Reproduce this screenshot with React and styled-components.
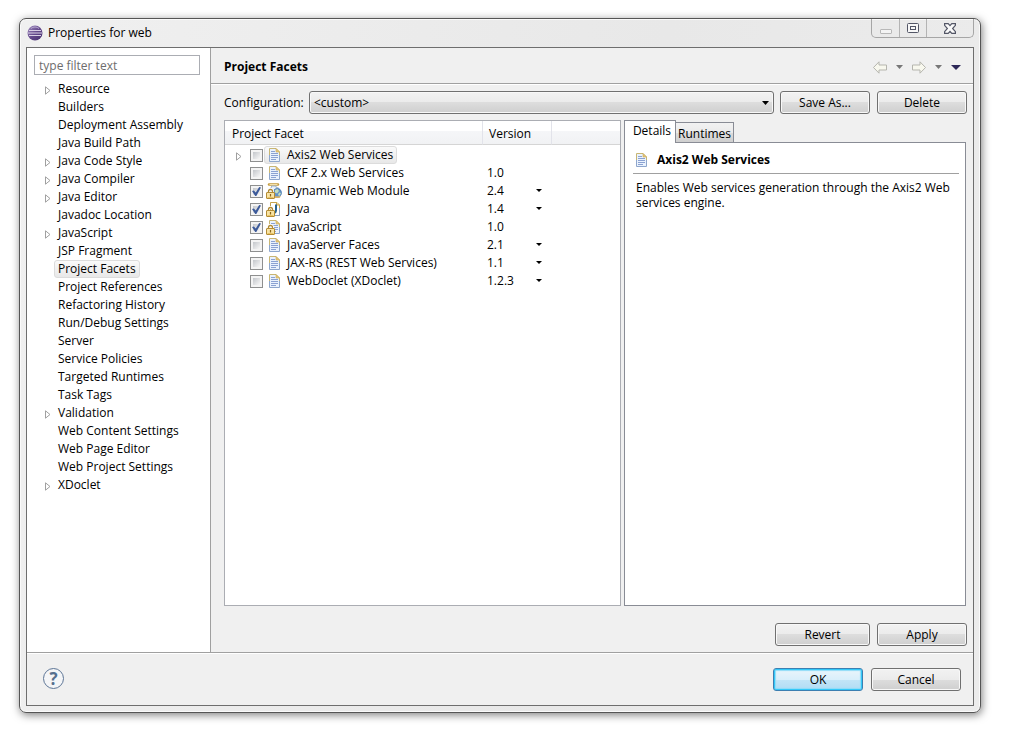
import { useState } from 'react';
import styled, { createGlobalStyle, css } from 'styled-components';

const pages = [
	{ name: 'Resource', expandable: true },
	{ name: 'Builders' },
	{ name: 'Deployment Assembly' },
	{ name: 'Java Build Path' },
	{ name: 'Java Code Style', expandable: true },
	{ name: 'Java Compiler', expandable: true },
	{ name: 'Java Editor', expandable: true },
	{ name: 'Javadoc Location' },
	{ name: 'JavaScript', expandable: true },
	{ name: 'JSP Fragment' },
	{ name: 'Project Facets' },
	{ name: 'Project References' },
	{ name: 'Refactoring History' },
	{ name: 'Run/Debug Settings' },
	{ name: 'Server' },
	{ name: 'Service Policies' },
	{ name: 'Targeted Runtimes' },
	{ name: 'Task Tags' },
	{ name: 'Validation', expandable: true },
	{ name: 'Web Content Settings' },
	{ name: 'Web Page Editor' },
	{ name: 'Web Project Settings' },
	{ name: 'XDoclet', expandable: true },
];

const facets = [
	{ name: 'Axis2 Web Services', expandable: true, icon: 'doc' },
	{ name: 'CXF 2.x Web Services', version: '1.0', icon: 'doc' },
	{ name: 'Dynamic Web Module', version: '2.4', icon: 'web', checked: true, choice: true },
	{ name: 'Java', version: '1.4', icon: 'java', checked: true, choice: true },
	{ name: 'JavaScript', version: '1.0', icon: 'script', checked: true },
	{ name: 'JavaServer Faces', version: '2.1', icon: 'doc', choice: true },
	{ name: 'JAX-RS (REST Web Services)', version: '1.1', icon: 'doc', choice: true },
	{ name: 'WebDoclet (XDoclet)', version: '1.2.3', icon: 'doc', choice: true },
];

function EclipseLogo() {
	return (
		<svg width='16' height='16' viewBox='0 0 16 16' aria-hidden='true'>
			<defs>
				<linearGradient id='ball' x1='0' y1='0' x2='1' y2='1'>
					<stop offset='0' stopColor='#a08cc0' />
					<stop offset='0.5' stopColor='#654a8c' />
					<stop offset='1' stopColor='#46306e' />
				</linearGradient>
			</defs>
			<circle cx='8' cy='8' r='7.5' fill='url(#ball)' />
			<path d='M2 5.5h12M1 8h14M2 10.5h12' stroke='#d9d0e6' strokeWidth='1.1' />
			<path d='M4 3.5a6 6 0 0 1 8 0' stroke='#b7a9cf' fill='none' />
		</svg>
	);
}

function TreeArrow() {
	return (
		<svg width='6' height='9' viewBox='0 0 6 9' aria-hidden='true'>
			<path d='M.5.8v7.4L5 4.5z' fill='#fff' stroke='#a0a0a0' />
		</svg>
	);
}

function Caret({ color = '#000', wide }) {
	return wide ? (
		<svg width='10' height='5' viewBox='0 0 10 5' aria-hidden='true'>
			<path d='M0 0h10L5 5z' fill={color} />
		</svg>
	) : (
		<svg width='7' height='4' viewBox='0 0 7 4' aria-hidden='true'>
			<path d='M0 0h7L3.5 4z' fill={color} />
		</svg>
	);
}

function Lock() {
	return (
		<>
			<path d='M2.5 10V8.500a2 2 0 0 1 4 0V10' fill='none' stroke='#fff' strokeWidth='3' />
			<path d='M2.5 10V8.500a2 2 0 0 1 4 0V10' fill='none' stroke='#b08a35' strokeWidth='1.300' />
			<rect x='.5' y='9.500' width='8' height='6' rx='.5' fill='#f8e3a4' stroke='#b48c33' />
			<path d='M1.500 14.500h6' stroke='#e9c465' />
			<path d='M4.500 11v2.500' stroke='#8b6618' strokeWidth='1.200' />
		</>
	);
}

function FacetIcon({ kind }) {
	return (
		<svg width='16' height='16' viewBox='0 0 16 16' aria-hidden='true'>
			{(kind === 'doc' || kind === 'script') && (
				<>
					<path d='M3.500 14.500v-13h7l3 3v10z' fill='#eaf2fd' />
					<path d='M3.500 9V1.500h6.500l3.500 3.500v4' fill='none' stroke='#c8b673' />
					<path d='M3.500 8v6.500h10V8' fill='none' stroke='#8ea6cc' />
					<path d='M10 1.500V5h3.500z' fill='#e8c878' stroke='#c9a857' strokeWidth='.6' />
					<path d='M5 4.500h4M5 6.500h7M5 8.500h7M5 10.500h7M5 12.500h5' stroke='#8ba2d2' />
				</>
			)}
			{kind === 'web' && (
				<>
					<path d='M3 1.500h9' stroke='#c39a3c' strokeWidth='2.400' strokeLinecap='round' />
					<path d='M3.500 1.500h8' stroke='#fae9b4' strokeWidth='.9' />
					<path d='M5.500 3h4.500v1.300a5 5 0 0 1 4.500 5l-2 5H5L2 9.500a5 5 0 0 1 3.500-5z' fill='#eaf1f9' stroke='#9fb3cb' />
					<circle cx='11.200' cy='9.800' r='4.300' fill='#6493c8' stroke='#3f73aa' strokeWidth='.7' />
					<path d='M9 7l2.500-1 1.500 2-2 2.500-2-1zM13 9.500l2 .5-1.500 3-1.500-1z' fill='#c5dfbb' />
					<path d='M8 13.200h7L13.500 15H8z' fill='#d9b368' />
				</>
			)}
			{kind === 'java' && (
				<>
					<path d='M4.500 1.500H11l2.500 2.500v10.500h-9z' fill='#fff' stroke='#c6a34d' />
					<path d='M10.500 1.500V4h3' fill='#f2dc9e' stroke='#c6a34d' />
					<path d='M13.500 7v7.500H8' fill='none' stroke='#8ba1c0' />
					<path d='M10 3.500v6a3 3 0 0 1-1.500 2.500' fill='none' stroke='#286392' strokeWidth='2' />
				</>
			)}
			{kind !== 'doc' && <Lock />}
		</svg>
	);
}

function HistoryArrow({ forward }) {
	return (
		<svg width='14' height='13' viewBox='0 0 14 13' aria-hidden='true'>
			<path
				d={forward ? 'M13.500 6.500L8 .8v3.200H.5v5H8v3.200z' : 'M.5 6.500L6 .8v3.200h7.500v5H6v3.200z'}
				fill='#f8f8ee'
				stroke='#b5b5ae'
			/>
		</svg>
	);
}

function App() {
	const [page, setPage] = useState('Project Facets');
	const [selected, setSelected] = useState('Axis2 Web Services');
	const [tab, setTab] = useState('Details');

	return (
		<Screen>
			<GlobalStyle />
			<Dialog>
				<TitleBar>
					<EclipseLogo />
					<WindowTitle>Properties for web</WindowTitle>
					<WindowControls>
						<WindowButton aria-label='Minimize' $width={27}>
							<svg width='12' height='14' viewBox='0 0 12 14'>
								<rect x='.5' y='8.500' width='11' height='4' rx='.5' fill='#f4f4f4' stroke='#b8b8b8' />
							</svg>
						</WindowButton>
						<WindowButton aria-label='Maximize' $width={27}>
							<svg width='12' height='10' viewBox='0 0 12 10'>
								<rect x='.5' y='.5' width='11' height='9' rx='1' fill='#f7f7f7' stroke='#535666' />
								<rect x='3.500' y='3.500' width='5' height='3' fill='#f7f7f7' stroke='#535666' />
							</svg>
						</WindowButton>
						<WindowButton aria-label='Close' $width={47}>
							<svg width='12' height='11' viewBox='0 0 12 11'>
								<path
									d='M.6.6h3.600L6 2.600 7.800.6h3.600v1.700L8.600 5.500l2.800 3.200v1.700H7.800L6 8.400l-1.800 2H.6V8.700l2.800-3.200L.6 2.300z'
									fill='#fafafa'
									stroke='#535666'
									strokeWidth='1.200'
								/>
							</svg>
						</WindowButton>
					</WindowControls>
				</TitleBar>

				<Content>
					<Panes>
						<Sidebar>
							<FilterInput placeholder='type filter text' aria-label='Filter' />
							<Tree>
								{pages.map((item) => (
									<TreeItem key={item.name}>
										<Expander>{item.expandable && <TreeArrow />}</Expander>
										<TreeLabel
											$active={item.name === page}
											onClick={() => setPage(item.name)}
										>
											{item.name}
										</TreeLabel>
									</TreeItem>
								))}
							</Tree>
						</Sidebar>

						<Main>
							<PageHeader>
								<PageTitle>Project Facets</PageTitle>
								<HistoryBar>
									<IconButton aria-label='Back'>
										<HistoryArrow />
									</IconButton>
									<IconButton aria-label='Back history'>
										<Caret color='#777' />
									</IconButton>
									<IconButton aria-label='Forward'>
										<HistoryArrow forward />
									</IconButton>
									<IconButton aria-label='Forward history'>
										<Caret color='#777' />
									</IconButton>
									<IconButton aria-label='Menu'>
										<Caret color='#2d2858' wide />
									</IconButton>
								</HistoryBar>
							</PageHeader>

							<ConfigRow>
								<ConfigLabel htmlFor='configuration'>Configuration:</ConfigLabel>
								<ComboBox>
									<ComboSelect id='configuration'>
										<option>&lt;custom&gt;</option>
									</ComboSelect>
									<ComboArrow>
										<Caret />
									</ComboArrow>
								</ComboBox>
								<ConfigButtons>
									<Button>Save As...</Button>
									<Button>Delete</Button>
								</ConfigButtons>
							</ConfigRow>

							<Facets>
								<TablePane>
									<FacetTable>
										<colgroup>
											<col width='258' />
											<col width='69' />
											<col />
										</colgroup>
										<thead>
											<tr>
												<HeadCell>Project Facet</HeadCell>
												<HeadCell>Version</HeadCell>
												<HeadCell />
											</tr>
										</thead>
										<tbody>
											{facets.map((facet) => (
												<tr key={facet.name}>
													<td>
														<FacetRow>
															<FacetExpander>{facet.expandable && <TreeArrow />}</FacetExpander>
															<Checkbox
																type='checkbox'
																aria-label={facet.name}
																defaultChecked={facet.checked}
															/>
															<FacetName
																$active={facet.name === selected}
																onClick={() => setSelected(facet.name)}
															>
																<FacetIcon kind={facet.icon} />
																{facet.name}
															</FacetName>
														</FacetRow>
													</td>
													<VersionCell>
														{facet.choice ? (
															<VersionBox>
																<VersionSelect aria-label={`${facet.name} version`}>
																	<option>{facet.version}</option>
																</VersionSelect>
																<VersionArrow>
																	<svg width='6' height='3' viewBox='0 0 6 3'>
																		<path d='M0 0h6L3 3z' />
																	</svg>
																</VersionArrow>
															</VersionBox>
														) : (
															facet.version
														)}
													</VersionCell>
													<td />
												</tr>
											))}
										</tbody>
									</FacetTable>
								</TablePane>

								<DetailsPane>
									<Tabs role='tablist'>
										{['Details', 'Runtimes'].map((name) => (
											<Tab
												key={name}
												role='tab'
												aria-selected={name === tab}
												$active={name === tab}
												onClick={() => setTab(name)}
											>
												{name}
											</Tab>
										))}
									</Tabs>
									<DetailsBody>
										<DetailsTitle>
											<FacetIcon kind='doc' />
											Axis2 Web Services
										</DetailsTitle>
										<Description>
											Enables Web services generation through the Axis2 Web services engine.
										</Description>
									</DetailsBody>
								</DetailsPane>
							</Facets>

							<PageButtons>
								<Button $wide>Revert</Button>
								<Button>Apply</Button>
							</PageButtons>
						</Main>
					</Panes>

					<Footer>
						<HelpButton aria-label='Help'>?</HelpButton>
						<FooterButtons>
							<Button $primary>OK</Button>
							<Button>Cancel</Button>
						</FooterButtons>
					</Footer>
				</Content>
			</Dialog>
		</Screen>
	);
}

export default App;

const GlobalStyle = createGlobalStyle`
	* {
		box-sizing: border-box;
	}
	body {
		margin: 0;
		background: #fff;
		color: #000;
	}
	body, button, input, select {
		font-family: 'Open Sans', 'Noto Sans', sans-serif;
		font-size: 12px;
		line-height: 16px;
	}
	svg {
		display: block;
		flex: none;
	}
`;

const Screen = styled.div`
	display: flex;
	min-height: 100vh;
	padding: 18px 30px 23px 19px;
`;

const Dialog = styled.div`
	flex: 1;
	display: flex;
	flex-direction: column;
	padding: 0 6px 6px;
	border: 1px solid #555;
	border-radius: 7px;
	background: linear-gradient(100deg, #f0f0f0, #e8e8e8 60%, #ececec);
	box-shadow: inset 0 0 0 1px #fafafa, 1px 2px 8px rgba(0, 0, 0, 0.5);
`;

const TitleBar = styled.header`
	display: flex;
	align-items: center;
	height: 28px;
	padding-left: 1px;
`;

const WindowTitle = styled.h1`
	flex: 1;
	margin: 0 0 0 5px;
	font-size: 12px;
	font-weight: 400;
`;

const WindowControls = styled.div`
	display: flex;
	align-self: flex-start;
	border: 1px solid #a6a6a6;
	border-top: 0;
	border-radius: 0 0 5px 5px;
`;

const WindowButton = styled.button`
	display: flex;
	align-items: center;
	justify-content: center;
	width: ${({ $width }) => $width}px;
	height: 18px;
	padding: 0;
	border: 0;
	background: transparent;

	& + & {
		border-left: 1px solid #b4b4b4;
	}
`;

const Content = styled.div`
	flex: 1;
	display: flex;
	flex-direction: column;
	border: 1px solid #6e6e6e;
	background: #f0f0f0;
`;

const Panes = styled.div`
	flex: 1;
	display: flex;
`;

const Sidebar = styled.nav`
	flex: none;
	width: 184px;
	padding: 7px 10px 0 7px;
	border-right: 1px solid #a0a0a0;
	background: #fff;
`;

const FilterInput = styled.input`
	display: block;
	width: 100%;
	height: 20px;
	padding: 0 4px;
	border: 1px solid #abadb3;
	outline: none;

	&::placeholder {
		color: #6d6d6d;
		opacity: 1;
	}
`;

const Tree = styled.ul`
	margin: 5px 0 0;
	padding: 0;
	list-style: none;
`;

const TreeItem = styled.li`
	display: flex;
	height: 18px;
`;

const Expander = styled.span`
	display: flex;
	width: 20px;
	padding: 6px 0 0 11px;
`;

const selection = css`
	border-color: #dcdcdc;
	background: linear-gradient(#fafafa, #e8e8e8);
`;

const TreeLabel = styled.button`
	height: 18px;
	padding: 0 3px;
	border: 1px solid transparent;
	border-radius: 3px;
	background: transparent;
	color: #000;
	white-space: nowrap;
	${({ $active }) => $active && selection}
`;

const Main = styled.main`
	flex: 1;
	min-width: 0;
	display: flex;
	flex-direction: column;
`;

const PageHeader = styled.div`
	display: flex;
	align-items: center;
	justify-content: space-between;
	height: 36px;
	padding: 3px 12px 0 13px;
	border-bottom: 1px solid #a0a0a0;
	box-shadow: 0 1px #fff;
`;

const PageTitle = styled.h2`
	margin: 0;
	font-size: 12px;
	font-weight: 700;
`;

const HistoryBar = styled.div`
	display: flex;
	align-items: center;
	gap: 9px;
`;

const IconButton = styled.button`
	padding: 0;
	border: 0;
	background: transparent;
`;

const ConfigRow = styled.div`
	display: flex;
	align-items: center;
	padding: 7px 6px 0 13px;
`;

const ConfigLabel = styled.label`
	width: 85px;
`;

const ComboBox = styled.div`
	flex: 1;
	display: grid;
	align-items: center;
	margin-right: 6px;
`;

const buttonFace = css`
	border: 1px solid #707070;
	border-radius: 3px;
	background: linear-gradient(#f2f2f2, #ebebeb 50%, #dddddd 50%, #cfcfcf);
	box-shadow: inset 0 0 0 1px #f8f8f8;
`;

const ComboSelect = styled.select`
	grid-area: 1 / 1;
	width: 100%;
	height: 23px;
	padding: 0 4px;
	appearance: none;
	color: #000;
	${buttonFace}
`;

const ComboArrow = styled.span`
	grid-area: 1 / 1;
	justify-self: end;
	margin-right: 5px;
	pointer-events: none;
`;

const ConfigButtons = styled.div`
	display: flex;
	gap: 7px;
`;

const Button = styled.button`
	width: ${({ $wide }) => ($wide ? 95 : 90)}px;
	height: 23px;
	padding: 0;
	color: #000;
	${buttonFace}
	${({ $primary }) =>
		$primary &&
		css`
			border-color: #3c7fb1;
			background: linear-gradient(#eaf5fb, #d9effb 50%, #c3e5f7 50%, #b0dcf4);
			box-shadow: inset 0 0 0 1px #33c8f8, inset 0 0 1px 2px #8fdcf8;
		`}
`;

const Facets = styled.div`
	flex: 1;
	display: grid;
	grid-template-columns: minmax(0, 397fr) minmax(0, 342fr);
	gap: 3px;
	padding: 6px 7px 0 13px;
`;

const TablePane = styled.div`
	border: 1px solid #abadb3;
	background: #fff;
`;

const FacetTable = styled.table`
	width: 100%;
	table-layout: fixed;
	border-collapse: separate;
	border-spacing: 0;

	td {
		height: 18px;
		padding: 0;
	}
	tbody tr:first-child td {
		height: 19px;
		padding-top: 1px;
	}
`;

const HeadCell = styled.th`
	height: 24px;
	padding: 2px 6px 0;
	border-right: 1px solid #e2e3ea;
	border-bottom: 1px solid #d5d5d5;
	background: linear-gradient(#fff 45%, #f5f6f8 45%, #f1f2f4);
	font-weight: 400;
	text-align: left;

	&:first-child {
		padding-left: 7px;
	}
	&:last-child {
		border-right: 0;
	}
`;

const FacetRow = styled.div`
	display: flex;
	align-items: center;
	height: 18px;
`;

const FacetExpander = styled.span`
	width: 25px;
	padding: 2px 0 0 11px;
`;

const Checkbox = styled.input`
	flex: none;
	display: grid;
	place-items: center;
	width: 13px;
	height: 13px;
	margin: 1px 1px 0 0;
	appearance: none;
	border: 1px solid #8e8f8f;
	background: linear-gradient(135deg, #b4b8be, #f6f6f6 80%);
	box-shadow: inset 0 0 0 2px #f4f4f4;

	&:checked::before {
		content: '';
		width: 9px;
		height: 9px;
		background: #3c5a9a;
		clip-path: polygon(0 45%, 20% 38%, 42% 62%, 80% 0, 100% 6%, 48% 100%, 36% 100%);
	}
`;

const FacetName = styled.button`
	display: flex;
	align-items: center;
	gap: 5px;
	height: 18px;
	padding: 0 3px 0 1px;
	border: 1px solid transparent;
	border-radius: 3px;
	background: transparent;
	color: #000;
	white-space: nowrap;
	${({ $active }) => $active && selection}
`;

const VersionCell = styled.td`
	&& {
		padding-left: 4px;
	}
`;

const VersionBox = styled.div`
	display: grid;
	align-items: center;
	height: 18px;
`;

const VersionSelect = styled.select`
	grid-area: 1 / 1;
	width: 100%;
	padding: 0;
	appearance: none;
	border: 0;
	background: transparent;
	color: #000;
`;

const VersionArrow = styled.span`
	grid-area: 1 / 1;
	justify-self: end;
	margin-right: 10px;
	padding-bottom: 1px;
	pointer-events: none;
`;

const DetailsPane = styled.section`
	display: flex;
	flex-direction: column;
`;

const Tabs = styled.div`
	display: flex;
	align-items: flex-end;
	height: 22px;
`;

const Tab = styled.button`
	width: 58px;
	height: 20px;
	padding: 2px 0 0;
	border: 1px solid #898c95;
	border-width: 1px 1px 0 0;
	background: linear-gradient(#f2f2f2, #ebebeb 50%, #dddddd 50%, #cfcfcf);
	color: #000;
	text-align: center;
	${({ $active }) =>
		$active &&
		css`
			z-index: 1;
			width: 52px;
			height: 23px;
			margin-bottom: -1px;
			padding: 0 0 2px 4px;
			border-left-width: 1px;
			background: #fff;
		`}
`;

const DetailsBody = styled.div`
	flex: 1;
	padding: 7px 6px 0 8px;
	border: 1px solid #898c95;
	background: #fff;
`;

const DetailsTitle = styled.h3`
	display: flex;
	align-items: center;
	gap: 8px;
	height: 24px;
	margin: 0;
	padding-bottom: 3px;
	border-bottom: 1px solid #a0a0a0;
	font-size: 12px;
	font-weight: 700;
`;

const Description = styled.p`
	margin: 6px 0 0;
	padding: 0 3px;
	line-height: 15px;
`;

const PageButtons = styled.div`
	display: flex;
	justify-content: flex-end;
	gap: 7px;
	padding: 17px 6px 6px;
`;

const Footer = styled.footer`
	display: flex;
	align-items: flex-start;
	justify-content: space-between;
	height: 53px;
	padding: 15px 12px 0 16px;
	border-top: 1px solid #a0a0a0;
	box-shadow: inset 0 1px #fff;
`;

const HelpButton = styled.button`
	width: 21px;
	height: 21px;
	padding: 0;
	border: 1px solid #5d7596;
	border-radius: 50%;
	background: #f4f5f7;
	color: #56708f;
	font-size: 17px;
	font-weight: 700;
	line-height: 18px;
`;

const FooterButtons = styled.div`
	display: flex;
	gap: 8px;
`;
